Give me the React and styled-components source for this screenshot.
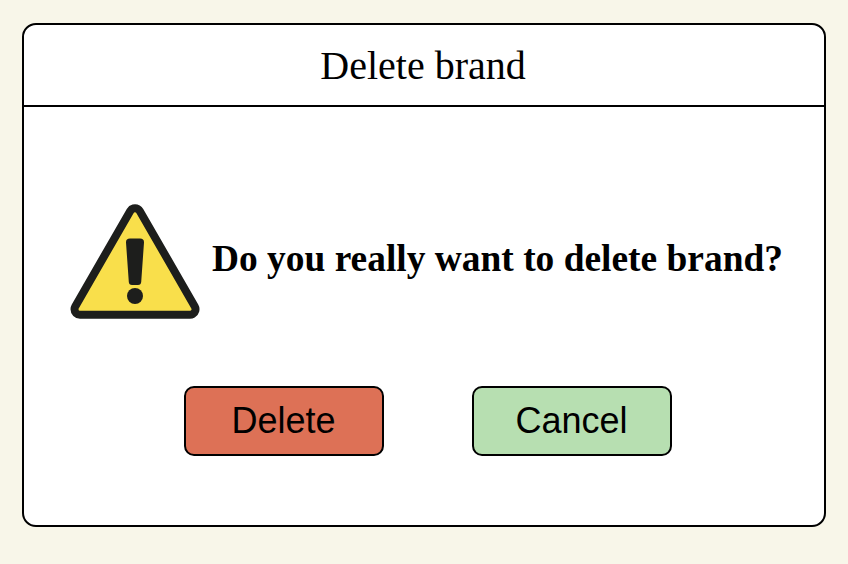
import React from 'react';
import styled, { createGlobalStyle } from 'styled-components';

const GlobalStyle = createGlobalStyle`
  * { box-sizing: border-box; }
  body { margin: 0; background: #f8f6e9; }
`;

const Page = styled.main`
  height: 564px;
  padding: 23px 22px 37px;
  background: #f8f6e9;
`;

const Dialog = styled.section`
  height: 504px;
  border: 2px solid #000;
  border-radius: 14px;
  background: #fff;
  color: #000;
  font-family: "Liberation Serif", "Times New Roman", serif;
`;

const Header = styled.header`
  height: 82px;
  border-bottom: 2px solid #000;
  display: flex;
  justify-content: center;
  padding-right: 2px;
  font-size: 40px;
  line-height: 81px;
`;

const Message = styled.div`
  display: flex;
  align-items: center;
  height: 116px;
  margin-top: 97px;
  padding-left: 46px;
  gap: 12px;
`;

const WarningIcon = styled.svg`
  width: 130px;
  height: 116px;
  flex: none;
`;

const Question = styled.strong`
  padding-bottom: 7px;
  font-size: 37.44px;
  line-height: 42px;
  white-space: nowrap;
`;

const Actions = styled.div`
  display: flex;
  gap: 88px;
  margin-top: 66px;
  padding-left: 160px;
`;

const Button = styled.button`
  width: 200px;
  height: 70px;
  padding: 0 1px 0 0;
  border: 2px solid #000;
  border-radius: 10px;
  background: ${({ $color }) => $color};
  color: #000;
  font: 36px/66px "Liberation Sans", Arial, sans-serif;
`;

export default function App() {
  return (
    <>
      <GlobalStyle />
      <Page>
        <Dialog>
          <Header>Delete brand</Header>
          <Message>
            <WarningIcon viewBox="0 0 130 116" strokeLinejoin="round" aria-hidden="true">
              <path d="M65 9.7L120 105.2H10Z" fill="#1d1e1c" stroke="#1d1e1c" strokeWidth="19" />
              <path d="M65 9.7L120 105.2H10Z" fill="#f9df4b" stroke="#f9df4b" strokeWidth="3" />
              <path d="M60 34.5H70Q74.2 34.5 74 38.5L71.2 78Q71 81 68 81H62Q59 81 58.8 78L56 38.5Q55.8 34.5 60 34.5Z" fill="#1d1e1c" />
              <circle cx="65" cy="92" r="8" fill="#1d1e1c" />
            </WarningIcon>
            <Question>Do you really want to delete brand?</Question>
          </Message>
          <Actions>
            <Button $color="#dd7156">Delete</Button>
            <Button $color="#b7dfb1">Cancel</Button>
          </Actions>
        </Dialog>
      </Page>
    </>
  );
}
